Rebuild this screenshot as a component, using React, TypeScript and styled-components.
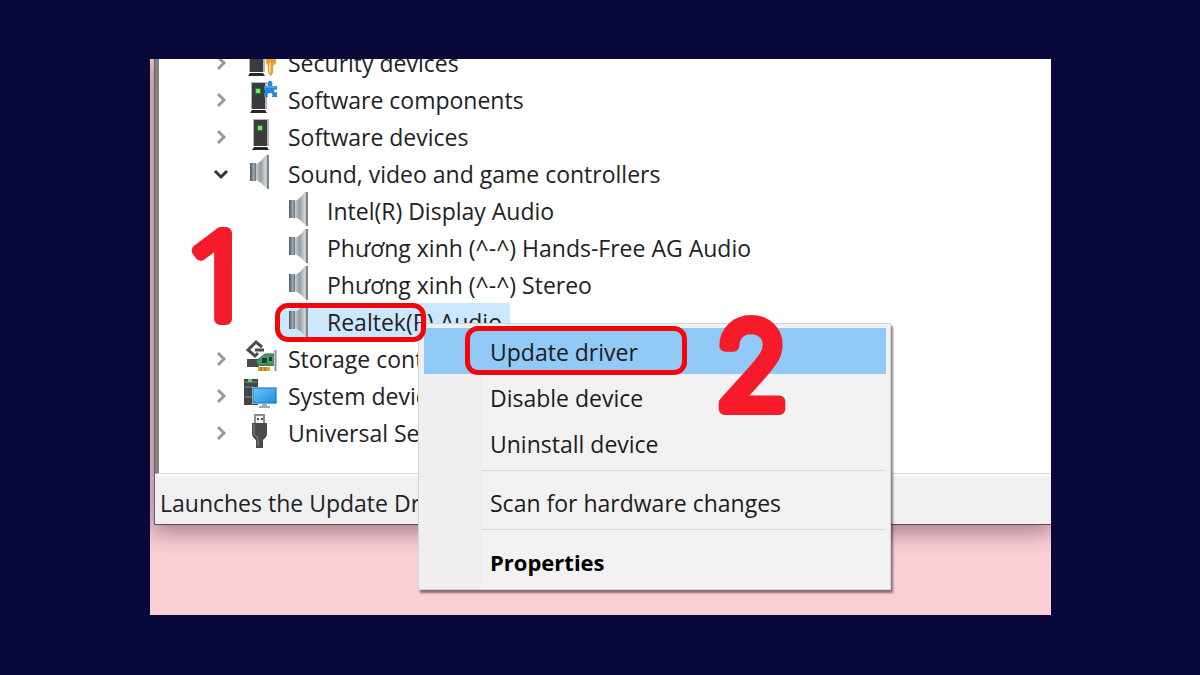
import React from 'react';
import styled, { createGlobalStyle } from 'styled-components';

const GlobalStyle = createGlobalStyle`
  * { box-sizing: border-box; }
  body {
    margin: 0;
    background: #08093a;
    font-family: 'Open Sans', 'Noto Sans', sans-serif;
    color: #222226;
  }
`;

const Page = styled.main`
  min-height: 100vh;
  display: flex;
  padding: 59px 149px 60px 150px;
  background: #08093a;
`;

const Desktop = styled.div`
  position: relative;
  flex: 1;
  min-width: 0;
  overflow: hidden;
  background: #facfd6;
`;

const Window = styled.section`
  margin-left: 4px;
  border-left: 1px solid #6d6064;
  border-bottom: 1px solid #5c4c50;
  background: #f0f0f0;
  box-shadow: 0 4px 22px 2px rgba(70, 30, 40, 0.5);
`;

const TreePane = styled.div`
  border-left: 4px solid #85817f;
  border-bottom: 1px solid #dcdcdc;
  background: #ffffff;
  overflow: hidden;
`;

const Tree = styled.ul`
  margin: -15px 0 0;
  padding: 0 0 22px 52px;
  list-style: none;
`;

const Row = styled.li<{ $child?: boolean }>`
  display: flex;
  align-items: center;
  height: 37px;
  padding-left: ${(p) => (p.$child ? '68px' : '0')};
`;

const Toggle = styled.button`
  display: flex;
  width: 20px;
  height: 20px;
  margin: 0 9px 0 0;
  padding: 0;
  border: 0;
  background: none;
`;

const Label = styled.span<{ $selected?: boolean }>`
  display: flex;
  align-items: center;
  gap: 11px;
  height: 37px;
  padding: 0 8px 0 5px;
  font-size: 23px;
  line-height: 36px;
  white-space: nowrap;
  background: ${(p) => (p.$selected ? '#cce8ff' : 'transparent')};
`;

const IconBox = styled.svg`
  flex: none;
  width: 32px;
  height: 37px;
  overflow: visible;
`;

const StatusBar = styled.footer`
  height: 50px;
  border-top: 3px solid #fafafa;
  padding-left: 5px;
  font-size: 23px;
  line-height: 52px;
  white-space: nowrap;
  overflow: hidden;
`;

const Menu = styled.div`
  position: absolute;
  left: 268px;
  top: 264px;
  width: 473px;
  padding: 4px 4px 5px 5px;
  border: 1px solid #d4d4d4;
  background: linear-gradient(to right, #efefef 63px, #f2f2f2 63px);
  box-shadow: 2px 3px 2px rgba(50, 30, 35, 0.55);
`;

const MenuItem = styled.button<{ $active?: boolean; $strong?: boolean }>`
  display: block;
  width: 100%;
  height: 46px;
  padding: 2px 0 0 66px;
  border: 0;
  background: ${(p) => (p.$active ? '#91c9f7' : 'transparent')};
  color: ${(p) => (p.$strong ? '#000000' : '#1c1c20')};
  font-family: inherit;
  font-size: ${(p) => (p.$strong ? '22px' : '23px')};
  font-weight: ${(p) => (p.$strong ? 700 : 400)};
  line-height: 42px;
  text-align: left;
  white-space: nowrap;
`;

const Separator = styled.hr`
  height: 1px;
  margin: 4px 1px 8px 58px;
  border: 0;
  background: #d9d9d9;
`;

const Ring = styled.div<{ $x: number; $y: number; $w: number; $h: number }>`
  position: absolute;
  left: ${(p) => p.$x}px;
  top: ${(p) => p.$y}px;
  width: ${(p) => p.$w}px;
  height: ${(p) => p.$h}px;
  border: 5px solid #f2060c;
  border-radius: 13px;
  pointer-events: none;
`;

const Step = styled.svg<{ $x: number; $y: number; $font: string }>`
  position: absolute;
  left: ${(p) => p.$x}px;
  top: ${(p) => p.$y}px;
  width: 90px;
  height: 120px;
  overflow: visible;
  pointer-events: none;

  text {
    font-family: ${(p) => p.$font}, sans-serif;
    font-size: 120px;
    font-weight: 300;
    fill: #f51b2a;
    stroke: #f51b2a;
    stroke-width: 12px;
    stroke-linejoin: round;
    stroke-linecap: round;
  }
`;

type IconName = 'security' | 'component' | 'device' | 'speaker' | 'storage' | 'system' | 'usb';

function Tower({ x }: { x: number }) {
  return (
    <g transform={`translate(${x} 0)`}>
      <rect x="1" y="1" width="16" height="27" fill="#b4b4b4" />
      <rect x="2" y="2" width="13" height="26" fill="#3b3b3d" />
      <rect x="5" y="7" width="6" height="6" fill="#237c2a" />
      <rect x="6" y="8" width="4" height="4" fill="#63ee62" />
      <path d="M2 29H15L17 32H0Z" fill="#262626" />
    </g>
  );
}

function DeviceIcon({ name }: { name: IconName }) {
  return (
    <IconBox viewBox="0 0 32 37" aria-hidden="true">
      <defs>
        <linearGradient id="cone" x1="0" x2="1">
          <stop offset="0" stopColor="#c9cdd0" />
          <stop offset="0.35" stopColor="#979da2" />
          <stop offset="0.75" stopColor="#d3d6d8" />
          <stop offset="1" stopColor="#8c9094" />
        </linearGradient>
        <linearGradient id="magnet" x1="0" x2="1">
          <stop offset="0" stopColor="#4b5864" />
          <stop offset="0.6" stopColor="#9aa6b0" />
          <stop offset="1" stopColor="#6d7780" />
        </linearGradient>
        <linearGradient id="screen" x1="0" y1="0" x2="1" y2="1">
          <stop offset="0" stopColor="#6cc5fa" />
          <stop offset="1" stopColor="#1f8ee0" />
        </linearGradient>
      </defs>
      {name === 'security' && (
        <>
          <Tower x={3} />
          <path d="M21 8H31V19L28 22V29L26 32L23 29V22L21 19Z" fill="#e2a02c" />
          <path d="M25 19V29" stroke="#f7cf74" strokeWidth="2" />
        </>
      )}
      {name === 'component' && (
        <>
          <Tower x={5} />
          <path
            d="M19 5H23C22 2 23 0 25 0S28 2 27 5H32V9C30 8 29 9 29 10S30 12 32 11V16H27C28 13 27 12 25 12S22 13 23 16H19V12C21 12 21 9 19 9Z"
            fill="#2788d9"
          />
          <path d="M20 6H31" stroke="#6dbcf5" />
        </>
      )}
      {name === 'device' && <Tower x={7} />}
      {name === 'speaker' && (
        <>
          <path d="M11 9Q16 7 20 1Q22 -1 24 0V34Q22 34 20 32Q16 27 11 25Z" fill="url(#cone)" />
          <path d="M23 0V34" stroke="#7f8489" strokeWidth="2" />
          <rect x="5" y="8" width="6" height="18" fill="url(#magnet)" />
        </>
      )}
      {name === 'storage' && (
        <>
          <path d="M2 19H14V27H2Z" fill="#47494b" />
          <path d="M17 7L11 2L3 10L10 16L13 13" stroke="#4b4d4f" strokeWidth="3" fill="none" />
          <path d="M10 10H19" stroke="#4b4d4f" strokeWidth="3" fill="none" />
          <path d="M11 21L20 14L29 14V26H14Z" fill="#4e936d" />
          <path d="M11 21L20 14L29 14M15 25H28" stroke="#306c4d" fill="none" />
          <path d="M17 18H22V23H17ZM24 17H27V21H24Z" fill="#193f2d" />
          <rect x="13" y="27" width="12" height="4" fill="#dea52c" />
          <path d="M16 27V31M20 27V31" stroke="#8b641d" />
          <path d="M30.500 10V31" stroke="#8b8f90" strokeWidth="2" />
        </>
      )}
      {name === 'system' && (
        <>
          <rect x="-1" y="2" width="14" height="26" fill="#434548" />
          <path d="M0 5H12M0 10H8M0 20H8" stroke="#8a8d90" />
          <rect x="3" y="2" width="4" height="3" fill="#52d35a" />
          <rect x="7" y="10" width="25" height="17" fill="#dceaf3" />
          <rect x="8" y="11" width="23" height="15" fill="url(#screen)" stroke="#1874b3" />
          <path d="M17 27H22V29H25V31H14V29H17Z" fill="#99aab7" />
        </>
      )}
      {name === 'usb' && (
        <>
          <path d="M10 9V1H19V9" fill="#f2f2f2" stroke="#8b8d8f" strokeWidth="2" />
          <path d="M12 4H14V6H12ZM16 4H18V6H16Z" fill="#4d4d4d" />
          <path d="M7 9H22V20Q22 23 18 26V34H11V26Q7 23 7 20Z" fill="#4a4b4d" />
          <path d="M9 10V20L13 24V32" stroke="#858789" fill="none" />
        </>
      )}
    </IconBox>
  );
}

function Chevron({ open }: { open?: boolean }) {
  return (
    <svg width="20" height="20" viewBox="0 0 20 20" fill="none" aria-hidden="true">
      {open ? (
        <path d="M4 7L10 13L16 7" stroke="#333333" strokeWidth="3" />
      ) : (
        <path d="M7 4L13 10L7 16" stroke="#9b9b9b" strokeWidth="3" />
      )}
    </svg>
  );
}

interface Node {
  label: string;
  icon: IconName;
  open?: boolean;
  child?: boolean;
  selected?: boolean;
}

const nodes: Node[] = [
  { label: 'Security devices', icon: 'security' },
  { label: 'Software components', icon: 'component' },
  { label: 'Software devices', icon: 'device' },
  { label: 'Sound, video and game controllers', icon: 'speaker', open: true },
  { label: 'Intel(R) Display Audio', icon: 'speaker', child: true },
  { label: 'Phương xinh (^-^) Hands-Free AG Audio', icon: 'speaker', child: true },
  { label: 'Phương xinh (^-^) Stereo', icon: 'speaker', child: true },
  { label: 'Realtek(R) Audio', icon: 'speaker', child: true, selected: true },
  { label: 'Storage controllers', icon: 'storage' },
  { label: 'System devices', icon: 'system' },
  { label: 'Universal Serial Bus', icon: 'usb' },
];

export default function App() {
  return (
    <>
      <GlobalStyle />
      <Page>
        <Desktop>
          <Window>
            <TreePane>
              <Tree>
                {nodes.map((n) => (
                  <Row key={n.label} $child={n.child}>
                    {!n.child && (
                      <Toggle aria-label={`Toggle ${n.label}`} aria-expanded={!!n.open}>
                        <Chevron open={n.open} />
                      </Toggle>
                    )}
                    <Label $selected={n.selected}>
                      <DeviceIcon name={n.icon} />
                      {n.label}
                    </Label>
                  </Row>
                ))}
              </Tree>
            </TreePane>
            <StatusBar>Launches the Update Driver</StatusBar>
          </Window>

          <Menu role="menu">
            <MenuItem role="menuitem" $active>Update driver</MenuItem>
            <MenuItem role="menuitem">Disable device</MenuItem>
            <MenuItem role="menuitem">Uninstall device</MenuItem>
            <Separator />
            <MenuItem role="menuitem">Scan for hardware changes</MenuItem>
            <Separator />
            <MenuItem role="menuitem" $strong>Properties</MenuItem>
          </Menu>

          <Ring $x={125} $y={244} $w={151} $h={39} />
          <Ring $x={315} $y={267} $w={222} $h={49} />
          <Step $x={36} $y={165} $font="'Open Sans'">
            <text x="0" y="95">1</text>
          </Step>
          <Step $x={565} $y={256} $font="Inter">
            <text x="0" y="94">2</text>
          </Step>
        </Desktop>
      </Page>
    </>
  );
}
